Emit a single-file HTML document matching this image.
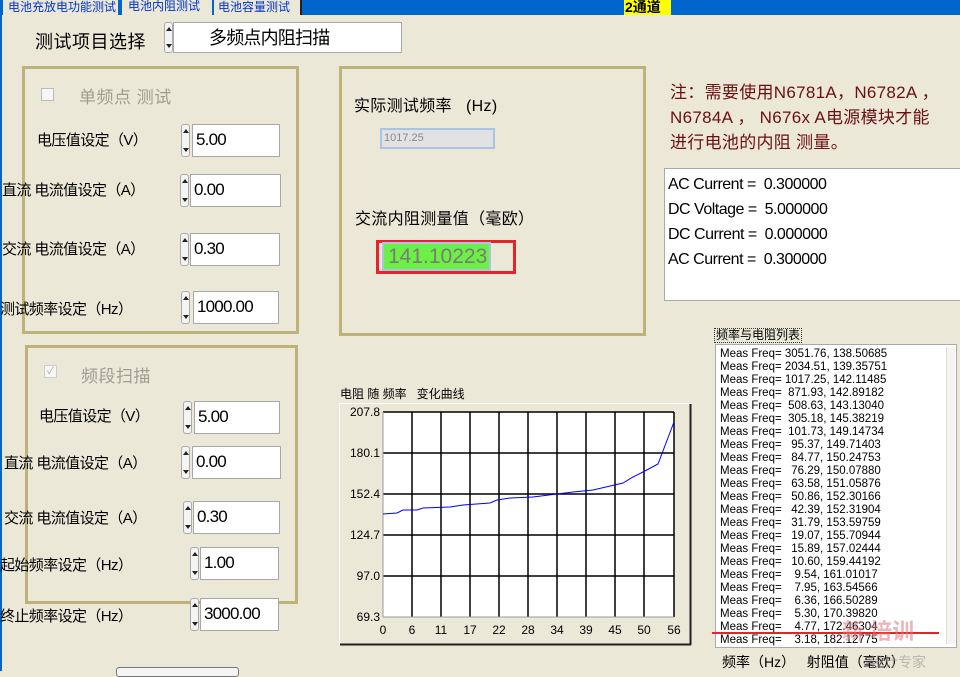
<!DOCTYPE html>
<html><head><meta charset="utf-8"><style>
*{margin:0;padding:0;box-sizing:border-box}
body{width:960px;height:671px;background:#ebe8d8;position:relative;overflow:hidden;font-family:"Liberation Sans","Noto Sans CJK SC",sans-serif;color:#000}
.a{position:absolute;white-space:nowrap}
.grp{position:absolute;border:3px solid #bdb27a}
.inp{position:absolute;background:#fff;border:1px solid #a8a8a8;font-size:17px;padding-left:3px;line-height:30px;letter-spacing:-0.8px}
.spin{position:absolute;width:9px;border:1px solid #aaa;border-radius:3px;background:#f4f4f4}
.spin:before{content:"";position:absolute;left:1px;top:4px;border:3px solid transparent;border-bottom:4px solid #222;border-top:0}
.spin:after{content:"";position:absolute;left:1px;bottom:4px;border:3px solid transparent;border-top:4px solid #222;border-bottom:0}
.lbl{font-size:15px;letter-spacing:-0.6px}
.list div{height:13px;line-height:13px}
</style></head><body>
<div class="a" style="left:0;top:0;width:960px;height:15px;background:#0066cc"></div>
<div class="a" style="left:0;top:15px;width:2px;height:656px;background:#0066cc"></div>
<div class="a" style="left:3px;top:0;width:115px;height:15px;background:#ebe8d8;font-size:12px;color:#0033cc;padding-left:5px;line-height:15px;overflow:hidden">电池充放电功能测试</div>
<div class="a" style="left:122px;top:0;width:90px;height:15px;background:#ebe8d8;font-size:12px;color:#0033cc;padding-left:6px;line-height:13px">电池内阻测试</div>
<div class="a" style="left:214px;top:0;width:88px;height:15px;background:#ebe8d8;font-size:12px;color:#0033cc;padding-left:4px;line-height:15px;border-right:2px solid #222">电池容量测试</div>
<div class="a" style="left:624px;top:0;width:47px;height:15px;background:#ff0;font-size:14px;font-weight:bold;line-height:15px;padding-left:1px">2通道</div>

<div class="a" style="left:35px;top:28px;font-size:18px;letter-spacing:0.5px">测试项目选择</div>
<div class="spin" style="left:164px;top:22px;height:31px"></div>
<div class="inp" style="left:173px;top:22px;width:229px;height:31px;font-size:18px;padding-left:35px;line-height:30px;border-color:#aaa">多频点内阻扫描</div>

<div class="grp" style="left:22px;top:66px;width:277px;height:268px"></div>
<div class="a" style="left:41px;top:88px;width:13px;height:13px;border:1px solid #bbb;background:#f6f6f6"></div>
<div class="a" style="left:79px;top:83px;font-size:17px;color:#a09c90;letter-spacing:0.5px">单频点 测试</div>
<div class="a lbl" style="left:37px;top:129px">电压值设定（V）</div>
<div class="spin" style="left:181px;top:124px;height:33px"></div>
<div class="inp" style="left:192px;top:124px;width:88px;height:33px">5.00</div>
<div class="a lbl" style="left:2px;top:179px">直流 电流值设定（A）</div>
<div class="spin" style="left:180px;top:174px;height:33px"></div>
<div class="inp" style="left:190px;top:174px;width:91px;height:33px">0.00</div>
<div class="a lbl" style="left:2px;top:238px">交流 电流值设定（A）</div>
<div class="spin" style="left:180px;top:233px;height:33px"></div>
<div class="inp" style="left:190px;top:233px;width:90px;height:33px">0.30</div>
<div class="a lbl" style="left:0px;top:298px">测试频率设定（Hz）</div>
<div class="spin" style="left:181px;top:291px;height:33px"></div>
<div class="inp" style="left:193px;top:291px;width:86px;height:33px">1000.00</div>

<div class="grp" style="left:25px;top:345px;width:273px;height:259px"></div>
<div class="a" style="left:44px;top:365px;width:13px;height:13px;border:1px solid #ccc;background:#f6f6f6;font-size:10px;color:#aaa;line-height:11px;text-align:center">✓</div>
<div class="a" style="left:81px;top:362px;font-size:17px;color:#a09c90;letter-spacing:0.5px">频段扫描</div>
<div class="a lbl" style="left:39px;top:405px">电压值设定（V）</div>
<div class="spin" style="left:183px;top:401px;height:33px"></div>
<div class="inp" style="left:194px;top:401px;width:86px;height:33px">5.00</div>
<div class="a lbl" style="left:4px;top:452px">直流 电流值设定（A）</div>
<div class="spin" style="left:181px;top:446px;height:33px"></div>
<div class="inp" style="left:192px;top:446px;width:89px;height:33px">0.00</div>
<div class="a lbl" style="left:4px;top:507px">交流 电流值设定（A）</div>
<div class="spin" style="left:183px;top:501px;height:33px"></div>
<div class="inp" style="left:193px;top:501px;width:87px;height:33px">0.30</div>
<div class="a lbl" style="left:0px;top:554px">起始频率设定（Hz）</div>
<div class="spin" style="left:190px;top:547px;height:33px"></div>
<div class="inp" style="left:200px;top:547px;width:79px;height:33px">1.00</div>
<div class="a lbl" style="left:0px;top:605px">终止频率设定（Hz）</div>
<div class="spin" style="left:190px;top:598px;height:33px"></div>
<div class="inp" style="left:200px;top:598px;width:79px;height:33px">3000.00</div>
<div class="a" style="left:116px;top:667px;width:123px;height:10px;border:1px solid #777;border-radius:3px;background:#f4f4f4"></div>

<div class="grp" style="left:339px;top:66px;width:307px;height:270px"></div>
<div class="a" style="left:354px;top:92px;font-size:16px;letter-spacing:0.3px">实际测试频率 &nbsp;&nbsp;(Hz)</div>
<div class="a" style="left:380px;top:128px;width:115px;height:21px;background:#e2e2e2;border:2px solid #a9c4e4;font-size:11px;color:#888;line-height:17px;padding-left:2px">1017.25</div>
<div class="a" style="left:355px;top:205px;font-size:16px;letter-spacing:0.3px">交流内阻测量值（毫欧）</div>
<div class="a" style="left:376px;top:240px;width:140px;height:34px;border:3px solid #e8222a"></div>
<div class="a" style="left:382px;top:242px;width:109px;height:29px;background:#6df046;border:2px solid #a9c4e4;font-size:21px;color:#7a7a7a;line-height:25px;padding-left:4px">141.10223</div>

<div class="a" style="left:670px;top:80px;font-size:17px;color:#6b1010;line-height:25px;letter-spacing:0.3px">注：需要使用N6781A，N6782A ，<br>N6784A ， N676x A电源模块才能<br>进行电池的内阻 测量。</div>

<div class="a" style="left:664px;top:168px;width:300px;height:133px;background:#fff;border:1px solid #aaa;font-size:16px;line-height:25px;padding:3px 0 0 3px;letter-spacing:-0.5px">AC Current = &nbsp;0.300000<br>DC Voltage = &nbsp;5.000000<br>DC Current = &nbsp;0.000000<br>AC Current = &nbsp;0.300000</div>

<div class="a" style="left:340px;top:385px;font-size:12px">电阻 随 频率 &nbsp;&nbsp;变化曲线</div>
<svg class="a" style="left:339px;top:403px" width="353" height="243">
<rect x="0.5" y="0.5" width="351" height="241" fill="#ebe8d8" stroke="#fff"/>
<line x1="1" y1="241.5" x2="352" y2="241.5" stroke="#222" stroke-width="2"/>
<line x1="351.5" y1="1" x2="351.5" y2="242" stroke="#222" stroke-width="2"/>
<rect x="44" y="9" width="291" height="205" fill="#fff"/>
<g stroke="#000" stroke-width="1.5">
<line x1="44" y1="9" x2="335" y2="9"/><line x1="44" y1="50" x2="335" y2="50"/><line x1="44" y1="91" x2="335" y2="91"/><line x1="44" y1="132" x2="335" y2="132"/><line x1="44" y1="173" x2="335" y2="173"/>
<line x1="73" y1="9" x2="73" y2="214"/><line x1="102" y1="9" x2="102" y2="214"/><line x1="131" y1="9" x2="131" y2="214"/><line x1="160" y1="9" x2="160" y2="214"/><line x1="189" y1="9" x2="189" y2="214"/><line x1="218" y1="9" x2="218" y2="214"/><line x1="247" y1="9" x2="247" y2="214"/><line x1="276" y1="9" x2="276" y2="214"/><line x1="305" y1="9" x2="305" y2="214"/><line x1="335" y1="9" x2="335" y2="214"/>
</g>
<line x1="44" y1="9" x2="44" y2="214" stroke="#999"/>
<line x1="44" y1="214" x2="335" y2="214" stroke="#999"/>
<polyline fill="none" stroke="#00f" stroke-width="1" points="44,111 58,110 64,107 78,107 84,105 111,104 124,102 151,100 158,97 171,95 194,94 218,91 234,89 254,87 284,80 294,74 304,69 319,61 335,19"/>
<g font-family="Liberation Sans" font-size="12" fill="#000" text-anchor="end">
<text x="41" y="13">207.8</text><text x="41" y="54">180.1</text><text x="41" y="95">152.4</text><text x="41" y="136">124.7</text><text x="41" y="177">97.0</text><text x="41" y="218">69.3</text>
</g>
<g font-family="Liberation Sans" font-size="12" fill="#000" text-anchor="middle">
<text x="44" y="231">0</text><text x="73" y="231">6</text><text x="102" y="231">11</text><text x="131" y="231">17</text><text x="160" y="231">22</text><text x="189" y="231">28</text><text x="218" y="231">34</text><text x="247" y="231">39</text><text x="276" y="231">45</text><text x="305" y="231">50</text><text x="335" y="231">56</text>
</g>
</svg>

<div class="a" style="left:714px;top:328px;font-size:12px;border:1px dotted #333;padding:0 1px;line-height:13px">频率与电阻列表</div>
<div class="a list" style="left:715px;top:344px;width:242px;height:304px;background:#fff;border:1px solid #aaa;font-size:11.5px;padding:3px 0 0 4px;color:#000">
<div>Meas Freq= 3051.76, 138.50685</div><div>Meas Freq= 2034.51, 139.35751</div><div>Meas Freq= 1017.25, 142.11485</div><div>Meas Freq= &nbsp;871.93, 142.89182</div><div>Meas Freq= &nbsp;508.63, 143.13040</div><div>Meas Freq= &nbsp;305.18, 145.38219</div><div>Meas Freq= &nbsp;101.73, 149.14734</div><div>Meas Freq= &nbsp;&nbsp;95.37, 149.71403</div><div>Meas Freq= &nbsp;&nbsp;84.77, 150.24753</div><div>Meas Freq= &nbsp;&nbsp;76.29, 150.07880</div><div>Meas Freq= &nbsp;&nbsp;63.58, 151.05876</div><div>Meas Freq= &nbsp;&nbsp;50.86, 152.30166</div><div>Meas Freq= &nbsp;&nbsp;42.39, 152.31904</div><div>Meas Freq= &nbsp;&nbsp;31.79, 153.59759</div><div>Meas Freq= &nbsp;&nbsp;19.07, 155.70944</div><div>Meas Freq= &nbsp;&nbsp;15.89, 157.02444</div><div>Meas Freq= &nbsp;&nbsp;10.60, 159.44192</div><div>Meas Freq= &nbsp;&nbsp;&nbsp;9.54, 161.01017</div><div>Meas Freq= &nbsp;&nbsp;&nbsp;7.95, 163.54566</div><div>Meas Freq= &nbsp;&nbsp;&nbsp;6.36, 166.50289</div><div>Meas Freq= &nbsp;&nbsp;&nbsp;5.30, 170.39820</div><div>Meas Freq= &nbsp;&nbsp;&nbsp;4.77, 172.46304</div><div>Meas Freq= &nbsp;&nbsp;&nbsp;3.18, 182.12775</div>
</div>
<div class="a" style="left:946px;top:347px;width:9px;height:297px;background:#f4f4f0;border-left:1px solid #ddd"></div>
<div class="a" style="left:712px;top:632px;width:227px;height:2px;background:#e8222a"></div>
<div class="a" style="left:722px;top:652px;font-size:14px">频率（Hz） &nbsp;&nbsp;射阻值（毫欧）</div>
<div class="a" style="left:842px;top:614px;font-size:22px;font-weight:bold;color:rgba(220,120,130,0.55)">新 培训</div>
<div class="a" style="left:870px;top:652px;font-size:14px;color:rgba(150,150,150,0.6)">设计专家</div>
</body></html>
